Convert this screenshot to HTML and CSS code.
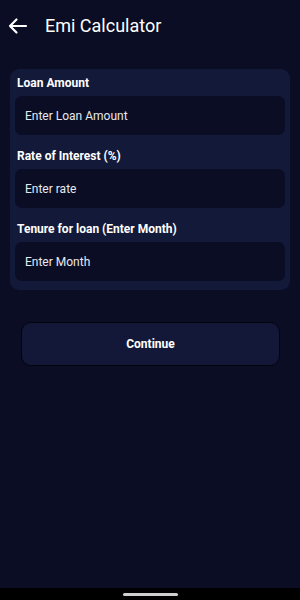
FILE: index.html
```html
<!DOCTYPE html>
<html>
<head>
	<meta charset="UTF-8">
	<title>Emi Calculator</title>
	<link rel="stylesheet" href="styles.css">
</head>
<body>
	<div class="screen">
		<div class="topbar">
			<svg class="back" width="20" height="20" viewBox="0 0 20 20">
				<path d="M2 10H18M8.5 3.5L2 10L8.5 16.5" stroke="#fff" stroke-width="2.2" fill="none" stroke-linecap="round" stroke-linejoin="round"/>
			</svg>
			<h1>Emi Calculator</h1>
		</div>
		<div class="card">
			<label>Loan Amount</label>
			<div class="field">Enter Loan Amount</div>
			<label>Rate of Interest (%)</label>
			<div class="field">Enter rate</div>
			<label>Tenure for loan (Enter Month)</label>
			<div class="field">Enter Month</div>
		</div>
		<div class="btn">Continue</div>
	</div>
	<div class="navbar"><span class="handle"></span></div>
</body>
</html>
```

FILE: styles.css
```css
*{
	margin: 0;
	padding: 0;
	box-sizing: border-box;
}
body{
	background: #0a0d24;
	font-family: Roboto, "Liberation Sans", sans-serif;
	color: #fff;
	width: 300px;
	height: 600px;
	display: flex;
	flex-direction: column;
}
.screen{
	flex: 1;
}
.topbar{
	height: 50px;
	display: flex;
	align-items: center;
	padding-left: 8px;
	padding-top: 1px;
}
.back{
	margin-right: 17px;
}
.topbar h1{
	font-size: 18px;
	font-weight: 400;
}
.card{
	margin: 19px 10px 0;
	background: #131938;
	border-radius: 9px;
	padding: 6px 5px 9px;
}
.card label{
	display: block;
	font-size: 12px;
	font-weight: 700;
	padding: 0 2px;
	height: 21px;
	line-height: 17px;
}
.field{
	background: #0a0d24;
	border-radius: 7px;
	height: 39px;
	line-height: 37px;
	padding: 2px 0 0 10px;
	font-size: 12px;
	color: #e8e9ee;
	margin-bottom: 13px;
}
.field:last-child{
	margin-bottom: 0;
}
.btn{
	margin: 32px 20px 0 21px;
	height: 44px;
	line-height: 43px;
	text-align: center;
	font-size: 12px;
	font-weight: 700;
	background: #131838;
	border: 1px solid #03040c;
	border-radius: 10px;
}
.navbar{
	height: 12px;
	background: #000;
	display: flex;
	justify-content: center;
	align-items: center;
}
.handle{
	width: 55px;
	height: 3px;
	border-radius: 2px;
	background: #d0d0d0;
}
```
